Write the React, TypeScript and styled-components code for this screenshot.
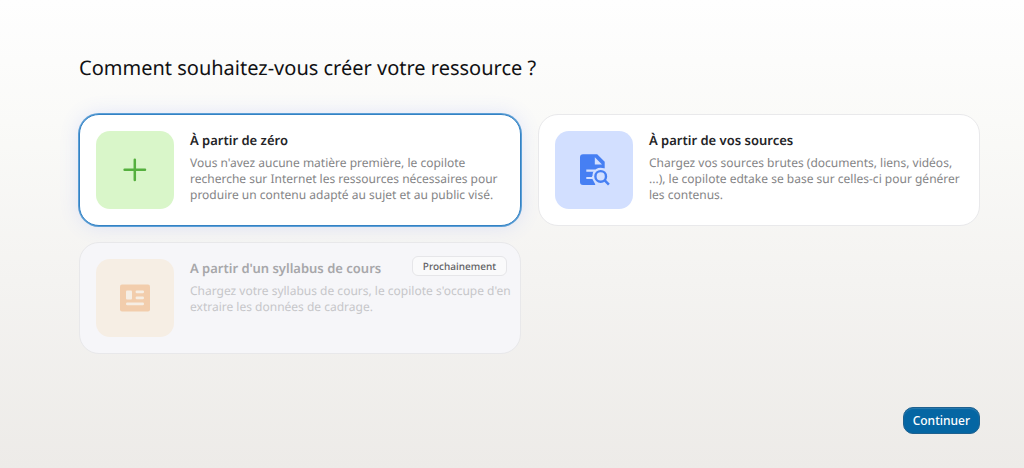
import React, { useState } from "react";
import styled, { createGlobalStyle, css } from "styled-components";

const GlobalStyle = createGlobalStyle`
  *, *::before, *::after { box-sizing: border-box; }
  html { height: 100%; }
  body {
    margin: 0;
    min-height: 100%;
    font-family: "Noto Sans", sans-serif;
    text-rendering: geometricPrecision;
    background: linear-gradient(180deg, #fefefe 0%, #fafaf8 26%, #f4f3f1 60%, #edebe8 100%) no-repeat;
  }
`;

const Page = styled.main`
  padding: 52px 44px 32px 79px;
`;

const Heading = styled.h1`
  margin: 0 0 30px;
  font-size: 20px;
  line-height: 32px;
  font-weight: 400;
  color: #111113;
`;

const Options = styled.div`
  display: grid;
  grid-template-columns: repeat(2, minmax(0, 1fr));
  gap: 16px 17px;
`;

const HiddenRadio = styled.input`
  position: absolute;
  opacity: 0;
  width: 1px;
  height: 1px;
  margin: 0;
`;

const Card = styled.label<{ $selected: boolean; $disabled: boolean }>`
  position: relative;
  display: flex;
  align-items: flex-start;
  gap: 16px;
  padding: 16px 8px 16px 16px;
  border: 1px solid #e9e9eb;
  border-radius: 20px;
  background: #ffffff;
  cursor: pointer;
  ${({ $selected }) =>
    $selected &&
    css`
      border-color: #3482c4;
      box-shadow: 0 0 0 1px #5c9fd6, 0 0 20px rgba(90, 110, 255, 0.16);
    `}
  ${({ $disabled }) =>
    $disabled &&
    css`
      background: #f6f6f9;
      border-color: #e8e8ea;
      cursor: default;
    `}
`;

const Tile = styled.span<{ $color: string }>`
  display: flex;
  flex: none;
  align-items: center;
  justify-content: center;
  width: 78px;
  height: 78px;
  border-radius: 14px;
  background: ${({ $color }) => $color};
`;

const CardText = styled.span`
  display: flex;
  flex-direction: column;
  gap: 6px;
  min-width: 0;
`;

const CardTitle = styled.span<{ $disabled: boolean }>`
  font-size: 13px;
  line-height: 18px;
  font-weight: 600;
  color: ${({ $disabled }) => ($disabled ? "#a7a7aa" : "#242427")};
`;

const CardDescription = styled.span<{ $disabled: boolean }>`
  font-size: 12px;
  line-height: 16px;
  color: ${({ $disabled }) => ($disabled ? "#c6c6c9" : "#848486")};
`;

const Badge = styled.span`
  position: absolute;
  top: 13px;
  right: 13px;
  padding: 0 10px;
  border: 1px solid #e6e6e9;
  border-radius: 6px;
  background: #fafafb;
  font-size: 10px;
  line-height: 18px;
  font-weight: 500;
  color: #5f6063;
`;

const Actions = styled.div`
  display: flex;
  justify-content: flex-end;
  margin-top: 53px;
`;

const PrimaryButton = styled.button`
  padding: 0 9px;
  border: 1px solid #1f618f;
  border-radius: 10px;
  background: #0566a3;
  box-shadow: inset 0 1px 1px #2a7bb0;
  font-family: inherit;
  font-size: 12px;
  line-height: 25px;
  font-weight: 500;
  color: #ffffff;
  cursor: pointer;
`;

const PlusIcon = () => (
  <svg width="36" height="36" viewBox="0 0 36 36" fill="none" aria-hidden="true">
    <path d="M17.8 7.8v20.2M7.6 17.8h20.4" stroke="#55b03e" strokeWidth="2.5" strokeLinecap="round" />
  </svg>
);

const DocumentSearchIcon = () => (
  <svg width="36" height="36" viewBox="0 0 36 36" fill="none" aria-hidden="true">
    <path
      d="M7 2.3H21.2L28.7 9.8V18H4V5.3a3 3 0 0 1 3-3ZM4 17h24.7v13H19.5V33H7a3 3 0 0 1-3-3Z"
      fill="#467ff3"
    />
    <path d="M18.8 5.2v7.2H26Z" fill="#d2dfff" />
    <path d="M10.3 18.6h9M10.3 26h9" stroke="#d2dfff" strokeWidth="2.1" />
    <path d="M24.7 15.7a8.6 8.6 0 0 0-7.2 13.4L19.6 33H34V18.4Q30 15.7 24.7 15.7Z" fill="#d2dfff" />
    <path d="M9.9 22.3h6.6" stroke="#467ff3" strokeWidth="3.6" />
    <circle cx="24.7" cy="24.4" r="5.3" stroke="#467ff3" strokeWidth="2.4" />
    <path d="m28.5 28.2 4.4 4.4" stroke="#467ff3" strokeWidth="2.5" />
  </svg>
);

const SyllabusIcon = () => (
  <svg width="36" height="36" viewBox="0 0 36 36" fill="none" aria-hidden="true">
    <rect x="3" y="4.5" width="30" height="27" rx="2" fill="#f2cdac" />
    <g fill="#f6eee4">
      <rect x="9" y="10.4" width="6" height="9" rx="1" />
      <rect x="18.6" y="10.4" width="8.4" height="2.8" rx="1.2" />
      <rect x="18.6" y="16.5" width="8.4" height="2.8" rx="1.2" />
      <rect x="9" y="22.5" width="18" height="2.8" rx="1.2" />
    </g>
  </svg>
);

interface Option {
  id: string;
  title: string;
  description: string;
  tile: string;
  icon: React.ReactNode;
  badge?: string;
}

const OPTIONS: Option[] = [
  {
    id: "zero",
    title: "À partir de zéro",
    description:
      "Vous n'avez aucune matière première, le copilote recherche sur Internet les ressources nécessaires pour produire un contenu adapté au sujet et au public visé.",
    tile: "#d9f6c9",
    icon: <PlusIcon />,
  },
  {
    id: "sources",
    title: "À partir de vos sources",
    description:
      "Chargez vos sources brutes (documents, liens, vidéos, ...), le copilote edtake se base sur celles-ci pour générer les contenus.",
    tile: "#d2dfff",
    icon: <DocumentSearchIcon />,
  },
  {
    id: "syllabus",
    title: "A partir d'un syllabus de cours",
    description:
      "Chargez votre syllabus de cours, le copilote s'occupe d'en extraire les données de cadrage.",
    tile: "#f6eee4",
    icon: <SyllabusIcon />,
    badge: "Prochainement",
  },
];

export default function App() {
  const [selected, setSelected] = useState("zero");

  return (
    <>
      <GlobalStyle />
      <Page>
        <Heading id="question">Comment souhaitez-vous créer votre ressource ?</Heading>
        <Options role="radiogroup" aria-labelledby="question">
          {OPTIONS.map(({ id, title, description, tile, icon, badge }) => {
            const disabled = Boolean(badge);
            return (
              <Card key={id} htmlFor={id} $selected={selected === id} $disabled={disabled}>
                <HiddenRadio
                  type="radio"
                  name="source"
                  id={id}
                  checked={selected === id}
                  disabled={disabled}
                  onChange={() => setSelected(id)}
                />
                <Tile $color={tile}>{icon}</Tile>
                <CardText>
                  <CardTitle $disabled={disabled}>{title}</CardTitle>
                  <CardDescription $disabled={disabled}>{description}</CardDescription>
                </CardText>
                {badge && <Badge>{badge}</Badge>}
              </Card>
            );
          })}
        </Options>
        <Actions>
          <PrimaryButton type="button">Continuer</PrimaryButton>
        </Actions>
      </Page>
    </>
  );
}
